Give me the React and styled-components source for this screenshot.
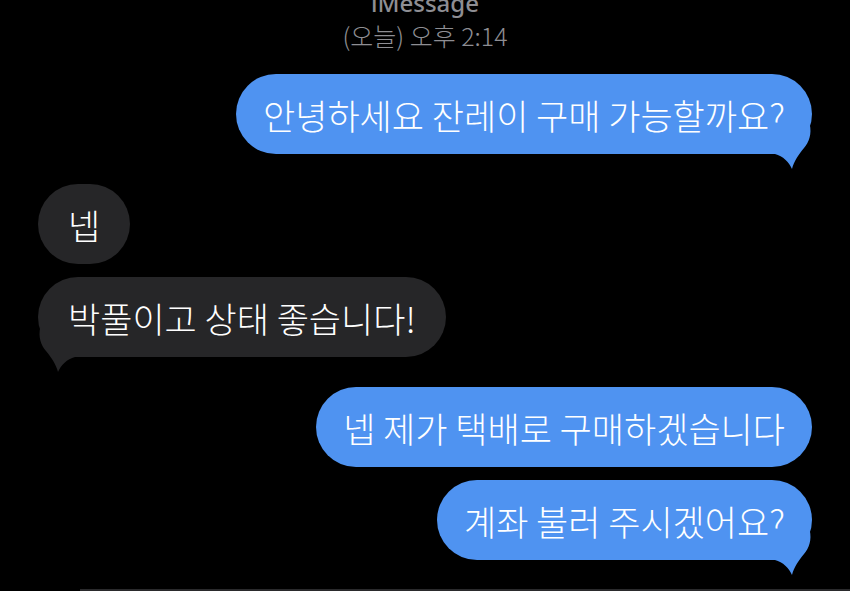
import React from 'react'
import styled, { createGlobalStyle } from 'styled-components'

const GlobalStyle = createGlobalStyle`
  html, body {
    margin: 0;
    padding: 0;
    background: #000;
  }
  body {
    font-family: 'Noto Sans CJK KR', 'Noto Sans', sans-serif;
    -webkit-font-smoothing: antialiased;
  }
`

const BLUE = '#4f93f1'
const GRAY = '#262628'

const Screen = styled.div`
  width: 850px;
  height: 591px;
  overflow: hidden;
  background: #000;
  box-sizing: border-box;
  padding: 0 38px;
  display: flex;
  flex-direction: column;
`

const Header = styled.header`
  margin-top: -12px;
  display: flex;
  flex-direction: column;
  align-items: center;
  color: #8e8e93;
  font-size: 25px;
  line-height: 29px;
`

const Service = styled.div`
  font-family: 'Noto Sans', sans-serif;
  font-weight: 500;
  font-size: 24px;
`

const Stamp = styled.div`
  margin-top: 4px;
  font-weight: 300;
`

const Thread = styled.div`
  display: flex;
  flex-direction: column;
  margin-top: 24px;
`

const Row = styled.div`
  display: flex;
  justify-content: ${p => (p.$sent ? 'flex-end' : 'flex-start')};
  margin-top: ${p => (p.$grouped ? '13px' : '30px')};
  &:first-child {
    margin-top: 0;
  }
`

const Bubble = styled.div`
  position: relative;
  height: 80px;
  min-width: 92px;
  box-sizing: border-box;
  padding: 0 ${p => (p.$sent ? 27 : 30)}px;
  border-radius: 40px;
  display: flex;
  align-items: center;
  justify-content: center;
  background: ${p => (p.$sent ? BLUE : GRAY)};
  color: #fff;
  font-size: 35px;
  font-weight: 300;
  letter-spacing: 0;
  white-space: nowrap;
`

const Tail = styled.svg`
  position: absolute;
  bottom: -15px;
  width: 41px;
  height: 45px;
  ${p => (p.$sent ? 'right: 0;' : 'left: 0; transform: scaleX(-1);')}
`

const Dock = styled.div`
  margin-top: auto;
  margin-left: 42px;
  margin-right: -38px;
  height: 2px;
  background: #2a2a2c;
`

const messages = [
  { sent: true, text: '안녕하세요 잔레이 구매 가능할까요?', tail: true },
  { sent: false, text: '넵' },
  { sent: false, text: '박풀이고 상태 좋습니다!', tail: true },
  { sent: true, text: '넵 제가 택배로 구매하겠습니다' },
  { sent: true, text: '계좌 불러 주시겠어요?', tail: true },
]

function BubbleTail({ sent }) {
  return (
    <Tail $sent={sent} viewBox="0 0 41 45" aria-hidden="true">
      <path
        d="M0 0 H38.7 C41 10 38 18 33 24 C28 30 23 37 21 45 C18 38 12 32 4 30 L0 30 Z"
        fill={sent ? BLUE : GRAY}
      />
    </Tail>
  )
}

export default function App() {
  return (
    <>
      <GlobalStyle />
      <Screen>
        <Header>
          <Service>iMessage</Service>
          <Stamp>(오늘) 오후 2:14</Stamp>
        </Header>
        <Thread>
          {messages.map((m, i) => (
            <Row
              key={i}
              $sent={m.sent}
              $grouped={i > 0 && messages[i - 1].sent === m.sent}
            >
              <Bubble $sent={m.sent}>
                {m.text}
                {m.tail && <BubbleTail sent={m.sent} />}
              </Bubble>
            </Row>
          ))}
        </Thread>
        <Dock />
      </Screen>
    </>
  )
}
